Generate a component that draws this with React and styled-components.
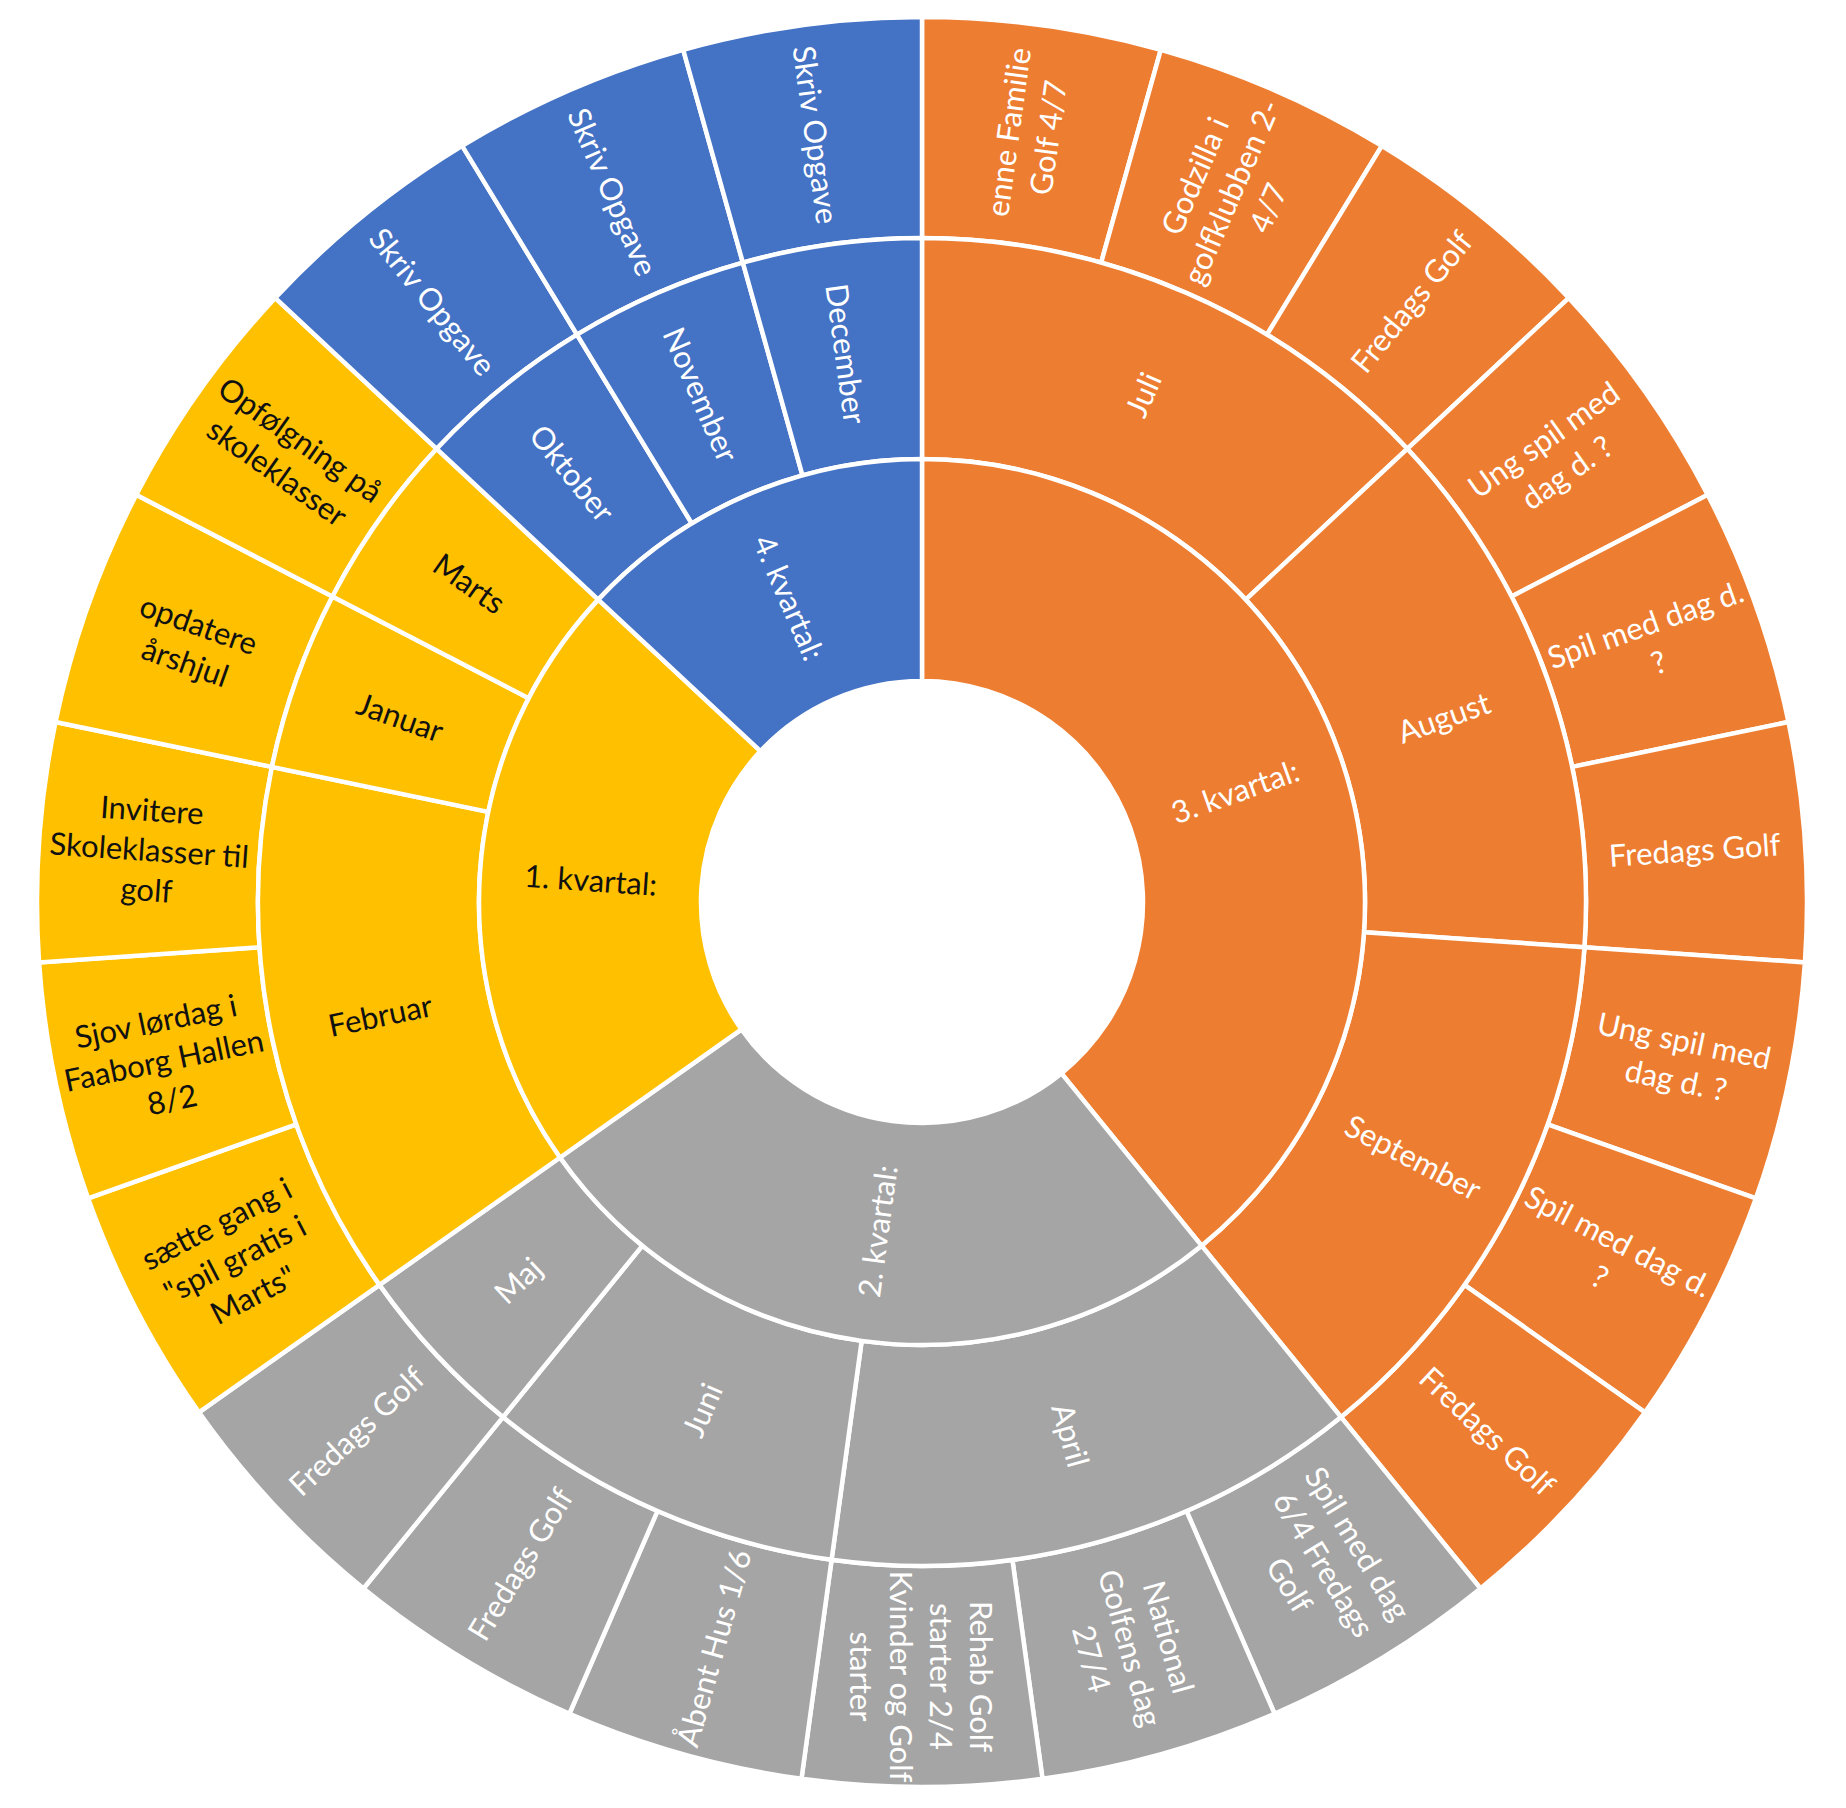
import React from "react";
import styled, { createGlobalStyle } from "styled-components";

const CX = 922;
const CY = 902;
const RINGS = [221, 443, 664, 885];
const LINE = 40;

const quarters = [
  {
    label: "3. kvartal:",
    fill: "#ED7D31",
    ink: "#ffffff",
    months: [
      {
        label: "Juli",
        items: [
          ["enne Familie", "Golf 4/7"],
          ["Godzilla i", "golfklubben 2-", "4/7"],
          ["Fredags Golf"],
        ],
      },
      {
        label: "August",
        items: [["Ung spil med", "dag d. ?"], ["Spil med dag d.", "?"], ["Fredags Golf"]],
      },
      {
        label: "September",
        items: [["Ung spil med", "dag d. ?"], ["Spil med dag d.", "?"], ["Fredags Golf"]],
      },
    ],
  },
  {
    label: "2. kvartal:",
    fill: "#A5A5A5",
    ink: "#ffffff",
    months: [
      {
        label: "April",
        items: [
          ["Spil med dag", "6/4 Fredags", "Golf"],
          ["National", "Golfens dag", "27/4"],
          ["Rehab Golf", "starter 2/4", "Kvinder og Golf", "starter"],
        ],
      },
      { label: "Juni", items: [["Åbent Hus 1/6"], ["Fredags Golf"]] },
      { label: "Maj", items: [["Fredags Golf"]] },
    ],
  },
  {
    label: "1. kvartal:",
    fill: "#FFC000",
    ink: "#111111",
    months: [
      {
        label: "Februar",
        items: [
          ["sætte gang i", "\"spil gratis i", "Marts\""],
          ["Sjov lørdag i", "Faaborg Hallen", "8/2"],
          ["Invitere", "Skoleklasser til", "golf"],
        ],
      },
      { label: "Januar", items: [["opdatere", "årshjul"]] },
      { label: "Marts", items: [["Opfølgning på", "skoleklasser"]] },
    ],
  },
  {
    label: "4. kvartal:",
    fill: "#4472C4",
    ink: "#ffffff",
    months: [
      { label: "Oktober", items: [["Skriv Opgave"]] },
      { label: "November", items: [["Skriv Opgave"]] },
      { label: "December", items: [["Skriv Opgave"]] },
    ],
  },
];

const total = quarters.reduce(
  (sum, q) => sum + q.months.reduce((s, m) => s + m.items.length, 0),
  0
);
const step = 360 / total;

function point(r, deg) {
  const a = (deg * Math.PI) / 180;
  return [CX + r * Math.sin(a), CY - r * Math.cos(a)];
}

function arc(r0, r1, a0, a1) {
  const large = a1 - a0 > 180 ? 1 : 0;
  const [x1, y1] = point(r1, a0);
  const [x2, y2] = point(r1, a1);
  const [x3, y3] = point(r0, a1);
  const [x4, y4] = point(r0, a0);
  return `M${x1} ${y1} A${r1} ${r1} 0 ${large} 1 ${x2} ${y2} L${x3} ${y3} A${r0} ${r0} 0 ${large} 0 ${x4} ${y4} Z`;
}

function labelRotation(mid) {
  let rot = mid - 90;
  if (rot > 90) rot -= 180;
  if (rot <= -90) rot += 180;
  return rot;
}

// flatten data into slices per ring
function buildSlices() {
  const slices = [];
  let cursor = 0;
  quarters.forEach((q) => {
    const qStart = cursor;
    q.months.forEach((m) => {
      const mStart = cursor;
      m.items.forEach((lines) => {
        slices.push({ ring: 2, a0: cursor, a1: cursor + step, lines, q });
        cursor += step;
      });
      slices.push({ ring: 1, a0: mStart, a1: cursor, lines: [m.label], q });
    });
    slices.push({ ring: 0, a0: qStart, a1: cursor, lines: [q.label], q });
  });
  return slices;
}

const slices = buildSlices();

export default function App() {
  return (
    <Page>
      <GlobalStyle />
      <Chart viewBox="0 0 1846 1808" role="img" aria-label="Årshjul">
        {slices.map((s, i) => (
          <Segment
            key={`seg-${i}`}
            d={arc(RINGS[s.ring], RINGS[s.ring + 1], s.a0, s.a1)}
            $fill={s.q.fill}
          />
        ))}
        {slices.map((s, i) => {
          const mid = (s.a0 + s.a1) / 2;
          const r = (RINGS[s.ring] + RINGS[s.ring + 1]) / 2;
          const [x, y] = point(r, mid);
          const n = s.lines.length;
          return (
            <Label
              key={`lbl-${i}`}
              $ink={s.q.ink}
              transform={`translate(${x} ${y}) rotate(${labelRotation(mid)})`}
            >
              {s.lines.map((line, j) => (
                <tspan key={j} x="0" y={(j - (n - 1) / 2) * LINE}>
                  {line}
                </tspan>
              ))}
            </Label>
          );
        })}
      </Chart>
    </Page>
  );
}

const GlobalStyle = createGlobalStyle`
  html, body {
    margin: 0;
    padding: 0;
    background: #ffffff;
  }
`;

const Page = styled.main`
  width: 1846px;
  height: 1808px;
  display: flex;
  background: #ffffff;
`;

const Chart = styled.svg`
  width: 1846px;
  height: 1808px;
  display: block;
`;

const Segment = styled.path`
  fill: ${({ $fill }) => $fill};
  stroke: #ffffff;
  stroke-width: 4.5;
  stroke-linejoin: miter;
`;

const Label = styled.text`
  fill: ${({ $ink }) => $ink};
  font-family: Lato, "Open Sans", "DejaVu Sans", sans-serif;
  font-size: 31px;
  text-anchor: middle;
  dominant-baseline: central;
`;
